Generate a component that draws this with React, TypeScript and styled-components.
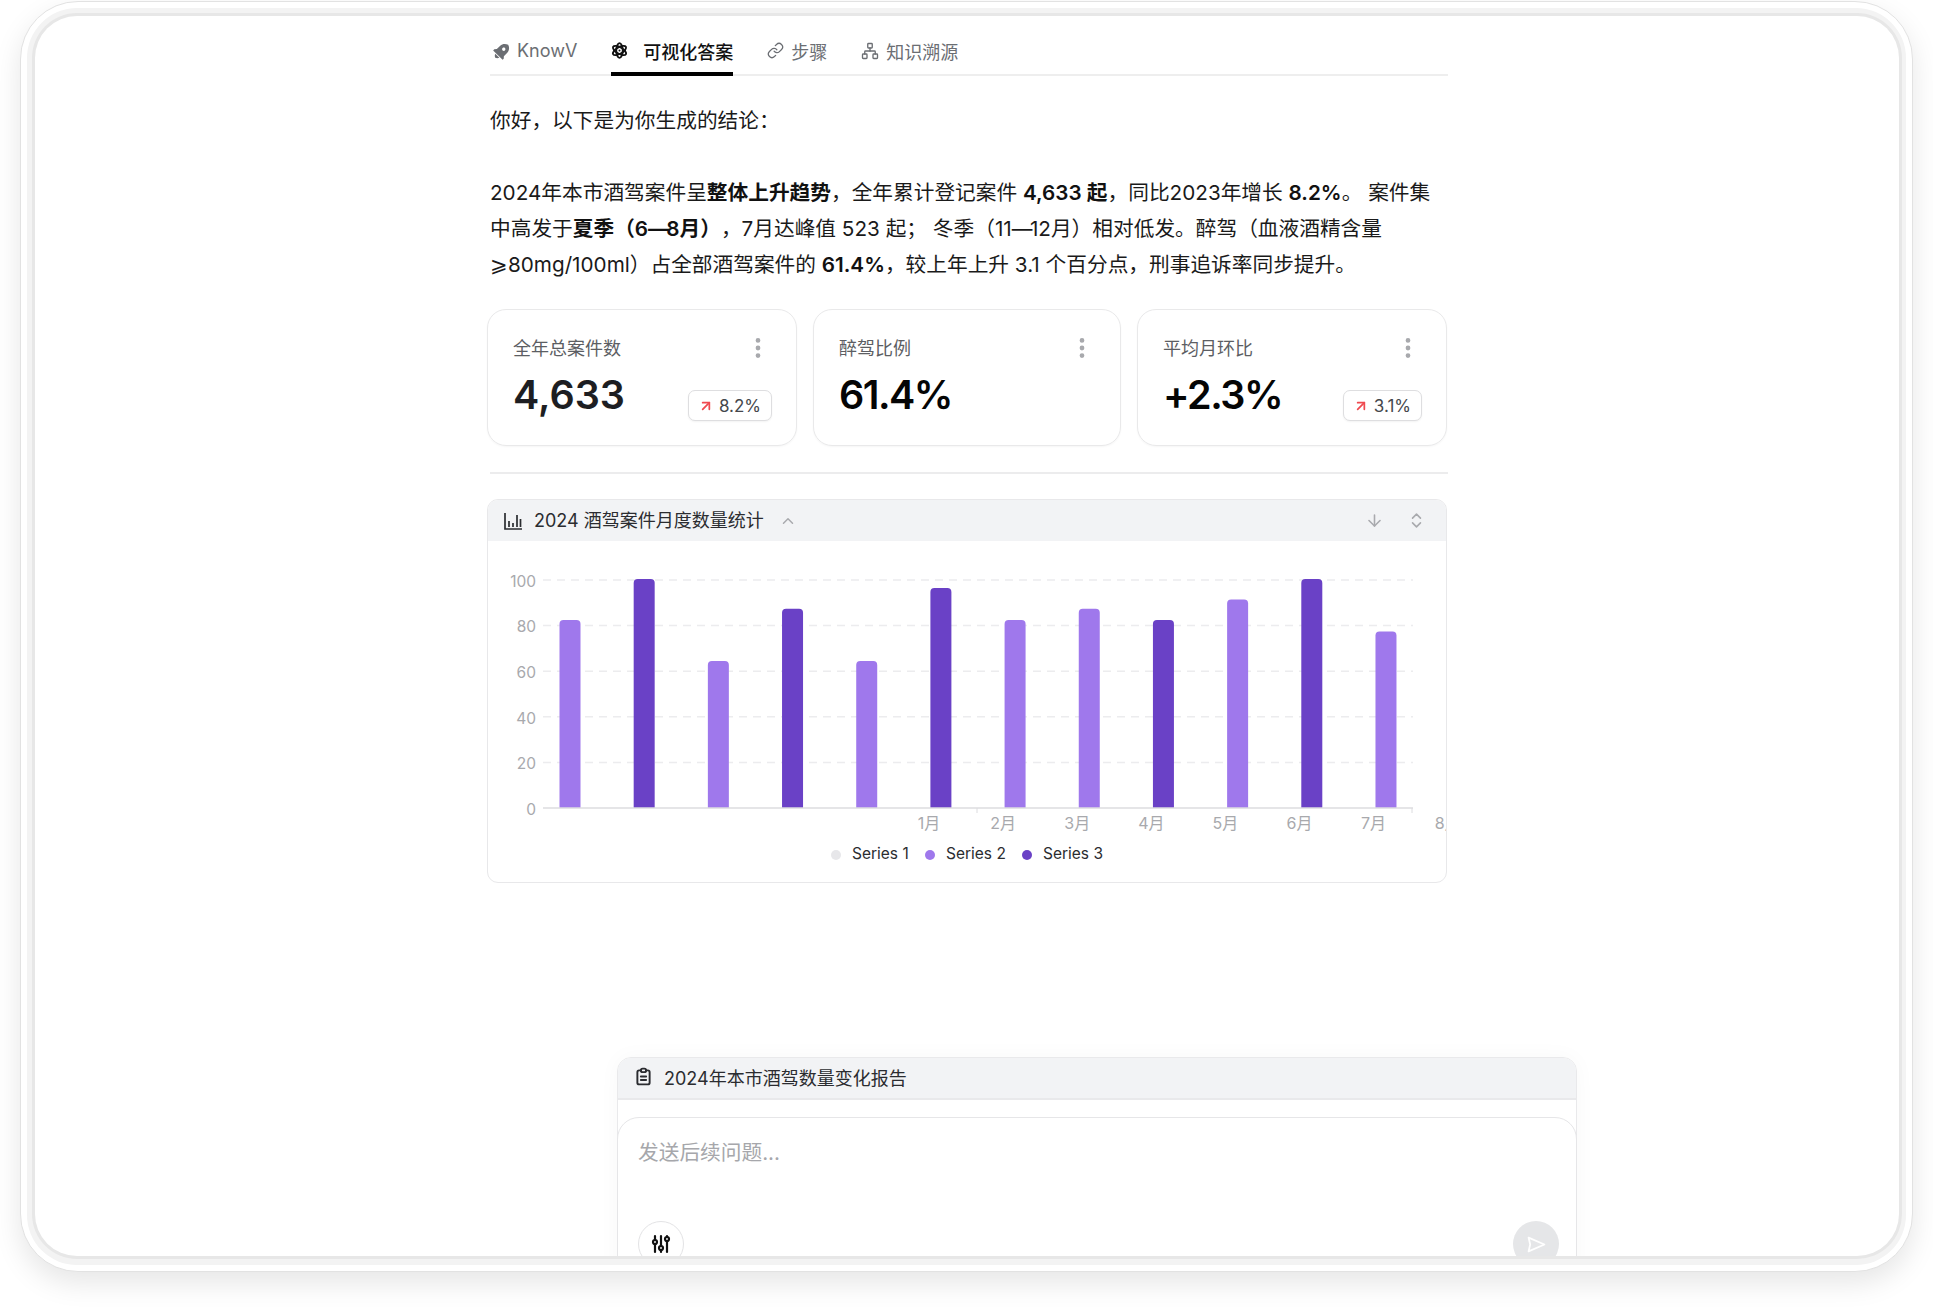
import React from 'react';
import styled, {createGlobalStyle} from 'styled-components';
import {ArrowDown, ArrowUpRight, ChevronUp, ChevronsUpDown, EllipsisVertical, Link, Network} from 'lucide-react';
import {RiRocket2Fill} from 'react-icons/ri';
import {TbAdjustments, TbClipboardText} from 'react-icons/tb';

const GlobalStyle = createGlobalStyle`
  html, body {
    margin: 0;
    padding: 0;
    background: #fff;
    overflow: hidden;
  }
  body {
    font-family: Inter, 'Noto Sans CJK SC', sans-serif;
    color: #1a1a1a;
    text-spacing-trim: space-all;
  }
  * {
    box-sizing: border-box;
  }
`;

const Page = styled.div`
  width: 1933px;
  height: 1311px;
  padding: 1px 0 0 20px;
`;

const Shell = styled.div`
  width: 1893px;
  height: 1271px;
  padding: 6px;
  background: #fff;
  border: 1px solid #e2e2e2;
  border-radius: 58px;
  box-shadow: 0 11px 28px rgba(0, 0, 0, 0.1);
`;

const Bezel = styled.div`
  height: 100%;
  padding: 8px 7px 9px 8px;
  background: #f3f3f3;
  border-radius: 50px;
`;

const Screen = styled.div`
  height: 100%;
  overflow: hidden;
  background: #fff;
  border-radius: 42px;
  box-shadow: 0 0 0 3px #e7e7e7;
`;

const Column = styled.div`
  width: 960px;
  margin-left: 452px;
`;

const Tabs = styled.div`
  display: flex;
  gap: 34px;
  height: 60px;
  margin: 0 -1px 0 3px;
  padding-left: 2px;
  border-bottom: 2px solid #eeeeee;
`;

const Tab = styled.div<{$active?: boolean}>`
  display: flex;
  align-items: center;
  gap: ${p => (p.$active ? 15 : 7)}px;
  height: 60px;
  padding-top: 13px;
  font-size: 18px;
  font-weight: ${p => (p.$active ? 500 : 400)};
  color: ${p => (p.$active ? '#111' : '#6b6e73')};
  border-bottom: 4px solid ${p => (p.$active ? '#000' : 'transparent')};
`;

const RocketIcon = styled(RiRocket2Fill)`
  margin-right: -2px;
  transform: rotate(45deg);
`;

const Message = styled.div`
  margin: 27px 0 0 3px;
  font-size: 20.7px;
  line-height: 36px;
  white-space: nowrap;
  color: #1a1a1a;

  p {
    margin: 0 0 36px;
  }
  p:last-child {
    margin: 0;
  }
  b {
    font-weight: 600;
    color: #111;
  }
`;

const Dash = styled.span`
  letter-spacing: -2.5px;
`;

const Cards = styled.div`
  display: grid;
  grid-template-columns: 310px 308px 310px;
  gap: 16px;
  margin-top: 26px;
`;

const Card = styled.div`
  height: 137px;
  padding: 25px 24px 0 25px;
  border: 1px solid #e9e9ea;
  border-radius: 19px;
  box-shadow: 0 1px 2px rgba(0, 0, 0, 0.04);
`;

const CardTop = styled.div`
  display: flex;
  align-items: center;
  justify-content: space-between;
  height: 24px;
`;

const CardTitle = styled.div`
  font-size: 18px;
  color: #5c5e63;
`;

const CardMore = styled(EllipsisVertical)`
  margin: 2px 1px 0 0;
  color: #a8a9ad;
  fill: #a8a9ad;
`;

const CardBottom = styled.div`
  display: flex;
  align-items: flex-start;
  justify-content: space-between;
  margin-top: 11px;
`;

const CardValue = styled.div<{$count?: boolean}>`
  font-size: 39.5px;
  line-height: 50px;
  font-weight: 600;
  letter-spacing: ${p => (p.$count ? 0 : -1.5)}px;
  color: ${p => (p.$count ? '#1d1e22' : '#050505')};
`;

const Badge = styled.div`
  display: flex;
  align-items: center;
  gap: 5px;
  height: 31px;
  margin-top: 20px;
  padding: 0 10px 0 9px;
  font-size: 17px;
  color: #45474c;
  background: #fff;
  border: 1px solid #dedee0;
  border-radius: 7px;
  box-shadow: 0 1px 2px rgba(0, 0, 0, 0.05);

  svg {
    color: #ef4a50;
  }
`;

const Divider = styled.div`
  height: 2px;
  margin: 26px -1px 25px 3px;
  background: #ececed;
`;

const Panel = styled.div`
  height: 384px;
  overflow: hidden;
  border: 1px solid #e8e8ea;
  border-radius: 11px;
`;

const PanelHead = styled.div`
  display: flex;
  align-items: center;
  height: 41px;
  padding: 0 20px 0 16px;
  background: #f2f3f5;
  font-size: 18px;
  color: #2b2c30;
`;

const PanelTitle = styled.span`
  margin: 0 15px 3px 12px;
`;

const HeadActions = styled.div`
  display: flex;
  align-items: center;
  gap: 23px;
  margin-left: auto;
  color: #a9aaae;
`;

const Chart = styled.svg`
  display: block;
  font-family: Inter, 'Noto Sans CJK SC', sans-serif;
`;

const Composer = styled.div`
  width: 960px;
  height: 400px;
  margin: 174px 0 0 582px;
  border: 1px solid #e9e9eb;
  border-radius: 14px 14px 0 0;
  box-shadow: 0 0 22px rgba(0, 0, 0, 0.03);
`;

const ReportHead = styled.div`
  display: flex;
  align-items: center;
  gap: 10px;
  height: 42px;
  padding: 0 0 3px 15px;
  font-size: 18px;
  color: #2b2c30;
  background: #f2f3f5;
  border-bottom: 2px solid #e9e9eb;
  border-radius: 13px 13px 0 0;
`;

const InputBox = styled.div`
  height: 300px;
  margin: 17px -1px 0 -1px;
  padding: 17px 17px 0 20px;
  background: #fff;
  border: 1px solid #e6e6e8;
  border-radius: 22px 22px 0 0;
`;

const Placeholder = styled.div`
  font-size: 20.7px;
  line-height: 36px;
  color: #a6a7ab;
`;

const InputActions = styled.div`
  display: flex;
  justify-content: space-between;
  margin-top: 50px;
`;

const RoundButton = styled.div<{$filled?: boolean}>`
  display: flex;
  align-items: center;
  justify-content: center;
  width: 46px;
  height: 46px;
  color: ${p => (p.$filled ? '#fff' : '#111')};
  background: ${p => (p.$filled ? '#e5e6e8' : '#fff')};
  border: ${p => (p.$filled ? 'none' : '1px solid #e3e3e5')};
  border-radius: 50%;
`;

const AtomIcon = () => (
  <svg width="17" height="17" viewBox="-12 -12 24 24" fill="none" stroke="currentColor" strokeWidth="2.6">
    <ellipse rx="4.6" ry="10.4"/>
    <ellipse rx="4.6" ry="10.4" transform="rotate(60)"/>
    <ellipse rx="4.6" ry="10.4" transform="rotate(120)"/>
    <circle r="1.4" fill="currentColor" stroke="none"/>
  </svg>
);

const BarsIcon = () => (
  <svg width="18" height="18" viewBox="0 0 18 18" fill="none" stroke="currentColor" strokeWidth="1.7">
    <path d="M1 1v16h17"/>
    <path d="M5 15V9M9 15v-4M13 15V3M16.5 15V7"/>
  </svg>
);

const SendIcon = () => (
  <svg width="19" height="17" viewBox="0 0 18 16" fill="none" stroke="currentColor" strokeWidth="1.7" strokeLinejoin="round">
    <path d="M1.5 1.5L16.5 8 1.5 14.5 3 8z"/>
  </svg>
);

const months = ['1月', '2月', '3月', '4月', '5月', '6月', '7月', '8月'];
const values = [82, 100, 64, 87, 64, 96, 82, 87, 82, 91, 100, 77];
const darkBars = [1, 3, 5, 8, 10];
const lightColor = '#9f78ec';
const darkColor = '#6a41c6';
const gridColor = '#ececee';

const BarChart = () => {
  const baseY = 267;
  const unit = 2.28;
  return (
    <Chart width={958} height={342} viewBox="0 0 958 342">
      {[20, 40, 60, 80, 100].map(v => (
        <line key={v} x1={55} x2={925} y1={baseY - v * unit} y2={baseY - v * unit} stroke={gridColor} strokeWidth={1.5} strokeDasharray="8 6"/>
      ))}
      {[0, 20, 40, 60, 80, 100].map(v => (
        <text key={v} x={48} y={baseY - v * unit + 2.5} textAnchor="end" dominantBaseline="middle" fontSize={15.5} fill="#a8a9ad">{v}</text>
      ))}
      {values.map((v, i) => {
        const x = 71.5 + i * 74.18;
        const top = baseY - v * unit - 1;
        return (
          <path
            key={i}
            d={`M${x} ${baseY}V${top + 4}q0 -4 4 -4h13q4 0 4 4V${baseY}z`}
            fill={darkBars.includes(i) ? darkColor : lightColor}
          />
        );
      })}
      <line x1={55} x2={925} y1={baseY} y2={baseY} stroke="#dcdcdf" strokeWidth={1.5}/>
      <line x1={489} x2={489} y1={baseY} y2={baseY + 5} stroke="#dcdcdf" strokeWidth={1}/>
      <line x1={924} x2={924} y1={baseY} y2={baseY + 5} stroke="#dcdcdf" strokeWidth={1}/>
      {months.map((m, i) => (
        <text key={m} x={441 + i * 74.1} y={284} textAnchor="middle" dominantBaseline="middle" fontSize={16} fill="#a8a9ad">{m}</text>
      ))}
      <circle cx={348} cy={314} r={5} fill="#e7e7ea"/>
      <text x={364} y={314} dominantBaseline="middle" fontSize={15.5} fill="#2b2c30">Series 1</text>
      <circle cx={442} cy={314} r={5} fill={lightColor}/>
      <text x={458} y={314} dominantBaseline="middle" fontSize={15.5} fill="#2b2c30">Series 2</text>
      <circle cx={539} cy={314} r={5} fill={darkColor}/>
      <text x={555} y={314} dominantBaseline="middle" fontSize={15.5} fill="#2b2c30">Series 3</text>
    </Chart>
  );
};

const stats = [
  {title: '全年总案件数', value: '4,633', change: '8.2%', count: true},
  {title: '醉驾比例', value: '61.4%'},
  {title: '平均月环比', value: '+2.3%', change: '3.1%'},
];

const App: React.FC = () => {
  return (
    <Page>
      <GlobalStyle/>
      <Shell>
        <Bezel>
          <Screen>
            <Column>
              <Tabs>
                <Tab><RocketIcon size={20}/>KnowV</Tab>
                <Tab $active><AtomIcon/>可视化答案</Tab>
                <Tab><Link size={17} strokeWidth={1.8}/>步骤</Tab>
                <Tab><Network size={18} strokeWidth={1.8}/>知识溯源</Tab>
              </Tabs>
              <Message>
                <p>你好，以下是为你生成的结论：</p>
                <p>
                  2024年本市酒驾案件呈<b>整体上升趋势</b>，全年累计登记案件 <b>4,633 起</b>，同比2023年增长 <b>8.2%</b>。 案件集<br/>
                  中高发于<b>夏季（6<Dash>—</Dash>8月）</b>，7月达峰值 523 起； 冬季（11<Dash>—</Dash>12月）相对低发。醉驾（血液酒精含量<br/>
                  ⩾80mg/100ml）占全部酒驾案件的 <b>61.4%</b>，较上年上升 3.1 个百分点，刑事追诉率同步提升。
                </p>
              </Message>
              <Cards>
                {stats.map(s => (
                  <Card key={s.title}>
                    <CardTop>
                      <CardTitle>{s.title}</CardTitle>
                      <CardMore size={26} strokeWidth={2.4}/>
                    </CardTop>
                    <CardBottom>
                      <CardValue $count={s.count}>{s.value}</CardValue>
                      {s.change && <Badge><ArrowUpRight size={16} strokeWidth={2.6}/>{s.change}</Badge>}
                    </CardBottom>
                  </Card>
                ))}
              </Cards>
              <Divider/>
              <Panel>
                <PanelHead>
                  <BarsIcon/>
                  <PanelTitle>2024 酒驾案件月度数量统计</PanelTitle>
                  <ChevronUp size={18} color="#a9aaae"/>
                  <HeadActions>
                    <ArrowDown size={19}/>
                    <ChevronsUpDown size={19}/>
                  </HeadActions>
                </PanelHead>
                <BarChart/>
              </Panel>
            </Column>
            <Composer>
              <ReportHead><TbClipboardText size={21} strokeWidth={2.2}/>2024年本市酒驾数量变化报告</ReportHead>
              <InputBox>
                <Placeholder>发送后续问题...</Placeholder>
                <InputActions>
                  <RoundButton><TbAdjustments size={24} strokeWidth={2.2}/></RoundButton>
                  <RoundButton $filled><SendIcon/></RoundButton>
                </InputActions>
              </InputBox>
            </Composer>
          </Screen>
        </Bezel>
      </Shell>
    </Page>
  );
};

export default App;
